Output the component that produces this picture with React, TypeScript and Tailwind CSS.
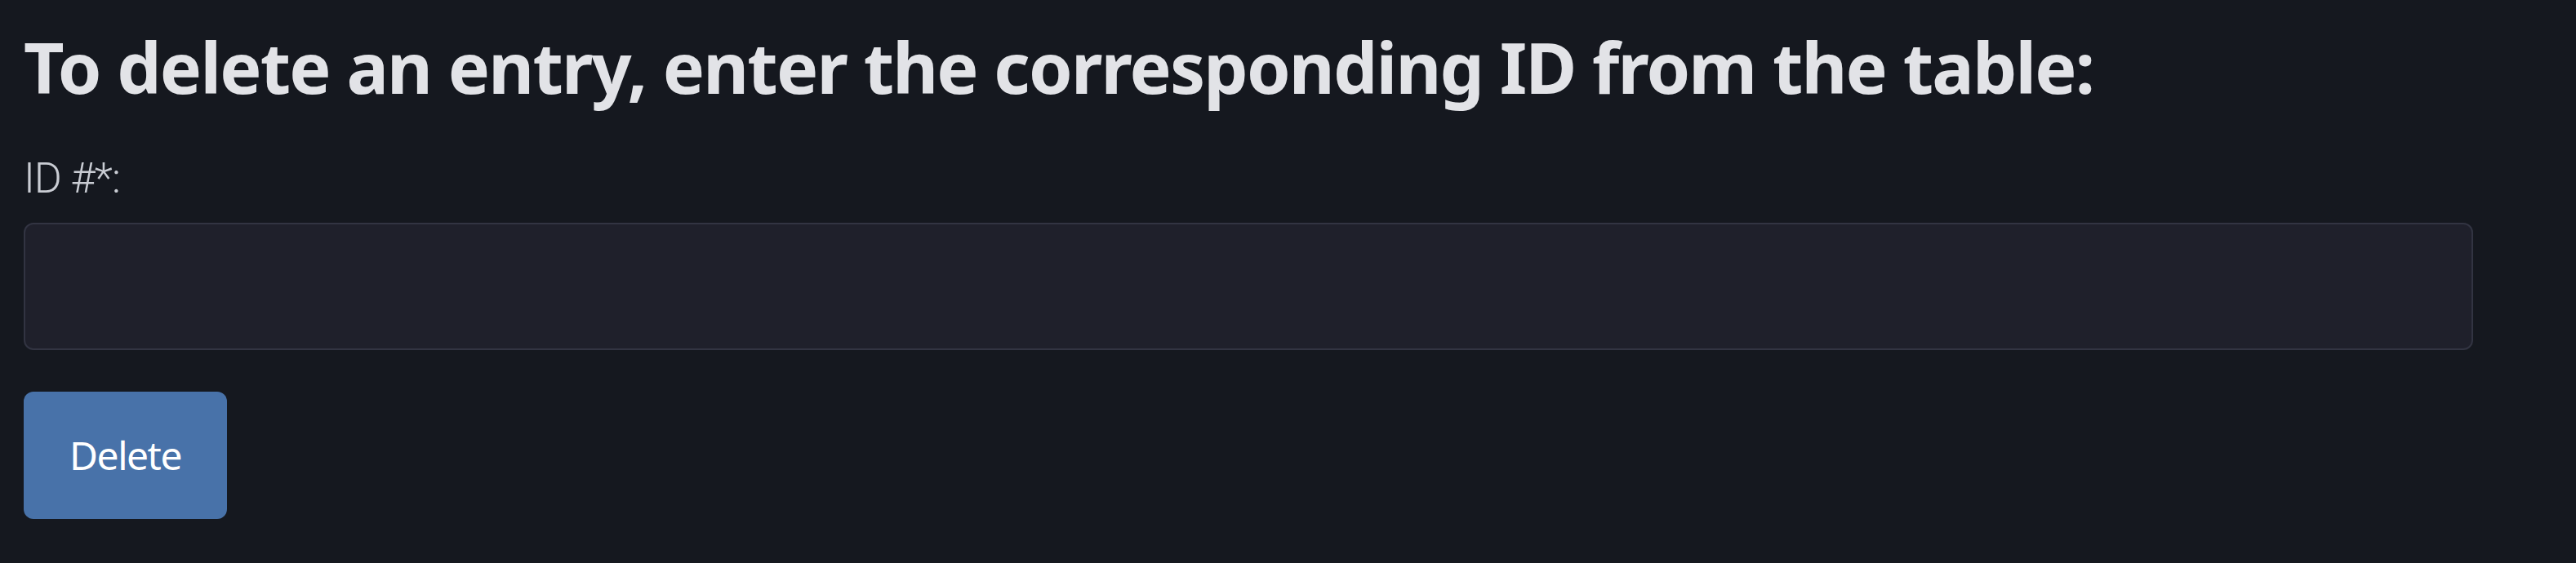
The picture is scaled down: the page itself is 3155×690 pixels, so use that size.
export default function App() {
  return (
    <div className="min-h-screen bg-[#15181f] pl-[29px] pt-[39px]">
      <h1 className="font-['Noto_Sans',sans-serif] text-[86px] font-bold leading-none tracking-[-1.8px] text-[#e2e3e7]">
        To delete an entry, enter the corresponding ID from the table:
      </h1>

      <form className="mt-[68px] flex flex-col items-start">
        <label
          htmlFor="entry-id"
          className="font-['Roboto',sans-serif] text-[52px] font-light leading-none tracking-[-1px] text-[#c9ccd3]"
        >
          ID #*:
        </label>
        <input
          id="entry-id"
          type="text"
          className="mt-[28px] h-[156px] w-[3000px] rounded-[12px] border-2 border-[#323442] bg-[#1f202b] px-6 text-[48px] text-[#e2e3e7] outline-none"
        />
        <button
          type="button"
          className="mt-[51px] flex h-[156px] w-[249px] items-center justify-center rounded-[12px] bg-[#4872a9] font-['Noto_Sans',sans-serif] text-[48px] leading-none tracking-[-1.5px] text-white"
        >
          Delete
        </button>
      </form>
    </div>
  );
}
